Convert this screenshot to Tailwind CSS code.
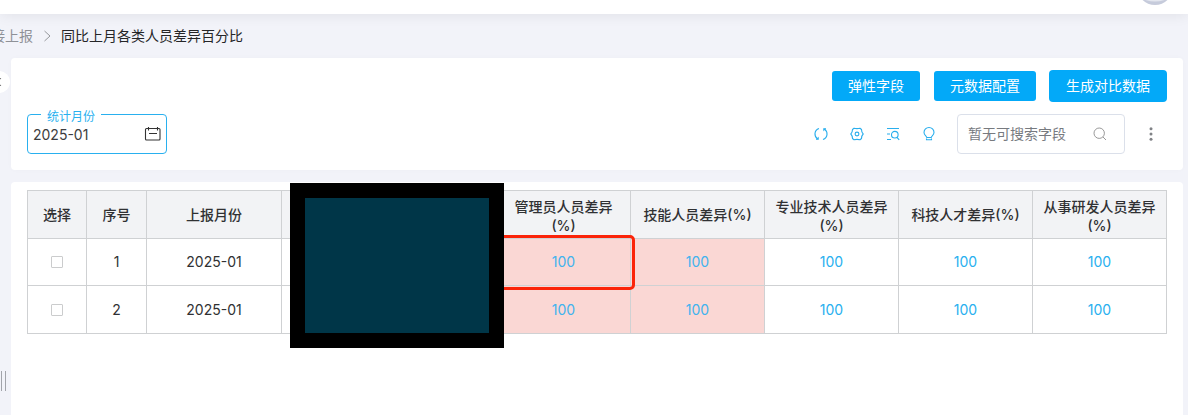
<!DOCTYPE html>
<html lang="zh-CN">
<head>
<meta charset="utf-8">
<title>同比上月各类人员差异百分比</title>
<script src="https://cdn.jsdelivr.net/npm/@tailwindcss/browser@4"></script>
</head>
<body class="relative flex h-[415px] w-[1188px] flex-col overflow-hidden bg-[#f2f3f9] font-['Inter','Noto_Sans_CJK_SC',sans-serif] text-sm text-[#303133]">
<header class="flex h-[14px] shrink-0 items-end justify-end bg-white pr-[15px] shadow-[0_1px_14px_rgba(0,0,0,0.08)]">
  <svg class="h-[14px] w-[36px]" viewBox="0 0 36 14"><circle cx="18" cy="-13" r="18" fill="#c6cbdb"/><ellipse cx="18" cy="-2.500" rx="12" ry="4" fill="#e4e7ef"/></svg>
</header>

<nav class="flex h-[44px] shrink-0 items-center whitespace-nowrap">
  <span class="-ml-[9px] text-[#8f9197]">接上报</span>
  <svg class="ml-[10px] h-[12px] w-[8px]" viewBox="0 0 8 12" fill="none" stroke="#96989c" stroke-width="1"><path d="M1.500 1 7 6 1.500 11"/></svg>
  <span class="ml-[10px] text-[#252628]">同比上月各类人员差异百分比</span>
</nav>

<main class="ml-[11px] mr-[5px] flex flex-1 flex-col gap-[12px]">
  <section class="flex h-[112px] shrink-0 flex-col rounded-[4px] bg-white pl-[16px] pr-[16px] pt-[12px] shadow-[0_0_6px_rgba(0,0,0,0.02)]">
    <div class="flex h-[32px] items-center justify-end text-white">
      <button class="h-[30px] w-[88px] rounded-[3px] bg-[#03a9f8]">弹性字段</button>
      <button class="ml-[14px] h-[30px] w-[102px] rounded-[3px] bg-[#03a9f8]">元数据配置</button>
      <button class="ml-[13px] h-[32px] w-[118px] rounded-[4px] bg-[#03a9f8]">生成对比数据</button>
    </div>
    <div class="mt-[12px] flex h-[40px] items-center">
      <div class="relative flex h-[40px] w-[140px] items-center justify-between rounded-[4px] border border-[#29b0ef] pl-[5px] pr-[4px]">
        <span class="absolute left-[13px] top-[-7px] bg-white px-[6px] text-xs leading-[18px] text-[#29b0ef]">统计月份</span>
        <span class="pt-[2px] text-[#3c3d40]">2025-01</span>
        <svg class="h-[16px] w-[18px]" viewBox="0 0 18 16" fill="none" stroke="#333" stroke-width="1.100"><rect x="1.500" y="2.500" width="14.500" height="11.500" rx="1"/><path d="M4.500 1v3.500M13.500 1v3.500M5 7.500h8"/></svg>
      </div>
      <div class="ml-auto flex items-center gap-[20px] text-[#29aeed]">
        <svg class="size-4" viewBox="0 0 16 16" fill="none" stroke="currentColor" stroke-width="1.100"><path d="M6 2.500C1 4.200.8 10.200 4.600 13M10 13.500C15 11.800 15.200 5.800 11.400 3"/><path d="M3 13.500h2.500v-2.300zM13 2.500h-2.500v2.300z" fill="currentColor" stroke-width=".5"/></svg>
        <svg class="size-4" viewBox="0 0 16 16" fill="none" stroke="currentColor" stroke-width="1.100"><path d="M5 2.300Q8 3 11 2.300L12.500 3.500Q12.500 6.200 14.200 8Q12.500 9.800 12.500 12.500L11 13.700Q8 13 5 13.700L3.500 12.500Q3.500 9.800 1.800 8Q3.500 6.200 3.500 3.500Z" stroke-linejoin="round"/><circle cx="8" cy="8" r="1.900"/></svg>
        <svg class="size-4" viewBox="0 0 16 16" fill="none" stroke="currentColor" stroke-width="1.100"><path d="M2 2.500h12M2 8h3M2 13.500h4M12 11.300l2.200 2.500"/><circle cx="9.800" cy="8.700" r="3.300"/></svg>
        <svg class="size-4" viewBox="0 0 16 16" fill="none" stroke="currentColor" stroke-width="1.100"><path d="M5.800 11.500C5.800 10 3 9.300 3 6.500a5 5 0 0 1 10 0c0 2.800-2.800 3.500-2.800 5zM5.500 12.500v1.200h5v-1.200"/></svg>
      </div>
      <div class="ml-[20px] flex h-[40px] w-[168px] items-center justify-between rounded-[4px] border border-[#dbe0ea] pl-[10px] pr-[17px] text-[#777a7f]">
        <span>暂无可搜索字段</span>
        <svg class="size-[14px]" viewBox="0 0 14 14" fill="none" stroke="#999" stroke-width="1"><circle cx="6.200" cy="6.200" r="5.200"/><path d="m10 10 3 3"/></svg>
      </div>
      <svg class="ml-[24px] h-[16px] w-[4px]" viewBox="0 0 4 16" fill="#808286"><circle cx="2" cy="2.700" r="1.500"/><circle cx="2" cy="8" r="1.500"/><circle cx="2" cy="13.300" r="1.500"/></svg>
      <span class="w-[14px]"></span>
    </div>
  </section>

  <section class="flex-1 rounded-t-[4px] bg-white pl-[16px] pt-[8px]">
    <div class="grid w-[1140px] grid-cols-[59px_60px_135px_215px_134px_134px_134px_134px_134px] grid-rows-[48px_47px_48px] border-l border-t border-[#cfd1d3] text-center *:flex *:items-center *:justify-center *:border-b *:border-r *:border-[#cfd1d3]">
      <div class="bg-[#f2f3f5] font-medium">选择</div>
      <div class="bg-[#f2f3f5] font-medium">序号</div>
      <div class="bg-[#f2f3f5] font-medium">上报月份</div>
      <div class="bg-[#f2f3f5]"></div>
      <div class="bg-[#f2f3f5] pt-[2px] font-medium leading-[19px]">管理员人员差异<br>(%)</div>
      <div class="bg-[#f2f3f5] font-medium">技能人员差异(%)</div>
      <div class="bg-[#f2f3f5] pt-[2px] font-medium leading-[19px]">专业技术人员差异<br>(%)</div>
      <div class="bg-[#f2f3f5] font-medium">科技人才差异(%)</div>
      <div class="bg-[#f2f3f5] pt-[2px] font-medium leading-[19px]">从事研发人员差异<br>(%)</div>

      <div><span class="size-[12px] rounded-[1px] border border-[#cbcccd]"></span></div>
      <div>1</div>
      <div>2025-01</div>
      <div></div>
      <div class="bg-[#fad7d4] text-[#41b3ee]">100</div>
      <div class="bg-[#fad7d4] text-[#41b3ee]">100</div>
      <div class="text-[#29b0ef]">100</div>
      <div class="text-[#29b0ef]">100</div>
      <div class="text-[#29b0ef]">100</div>

      <div><span class="size-[12px] rounded-[1px] border border-[#cbcccd]"></span></div>
      <div>2</div>
      <div>2025-01</div>
      <div></div>
      <div class="bg-[#fad7d4] text-[#41b3ee]">100</div>
      <div class="bg-[#fad7d4] text-[#41b3ee]">100</div>
      <div class="text-[#29b0ef]">100</div>
      <div class="text-[#29b0ef]">100</div>
      <div class="text-[#29b0ef]">100</div>
    </div>
  </section>
</main>

<!-- sidebar collapse handle and drag grip -->
<div class="absolute left-[-12px] top-[71px] size-[22px] rounded-full bg-white"><svg class="absolute left-[8px] top-[6px] size-[10px]" viewBox="0 0 10 10" fill="none" stroke="#777"><path d="M5 1 1.500 5 5 9"/></svg></div>
<div class="absolute left-[1px] top-[371px] h-[20px] w-[5px] border-x border-[#a2a4aa]"></div>

<!-- highlight and masked region over the table -->
<div class="absolute left-[490px] top-[235px] h-[55px] w-[145px] rounded-[5px] border-[3px] border-[#fb2409]"></div>
<div class="absolute left-[290px] top-[183px] h-[165px] w-[214px] border-[15px] border-black bg-[#003648]"></div>
</body>
</html>
